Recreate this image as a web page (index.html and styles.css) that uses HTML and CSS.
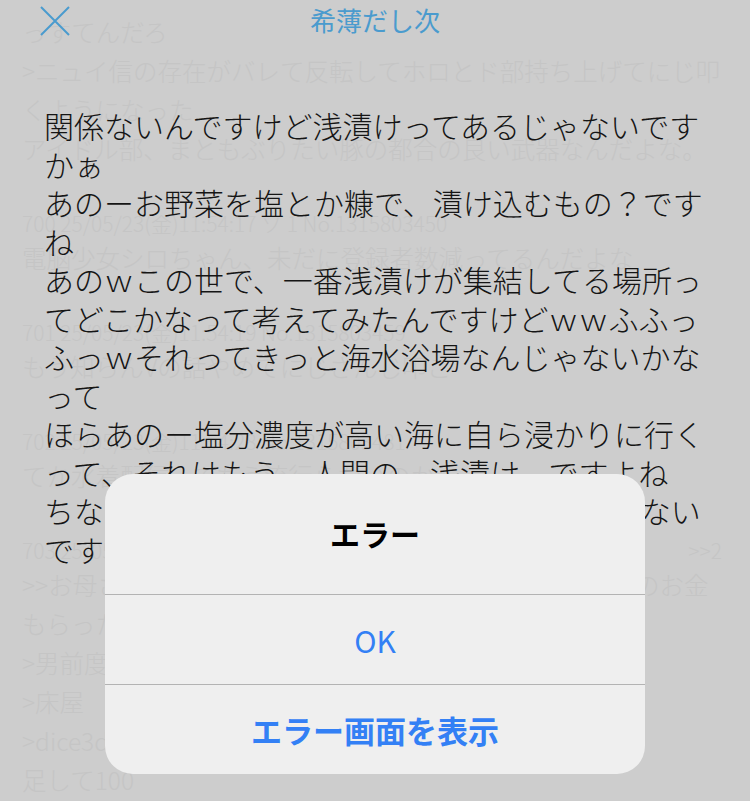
FILE: index.html
```html
<!DOCTYPE html>
<html lang="ja">
  <head>
    <meta charset="UTF-8" />
    <meta name="viewport" content="width=device-width, initial-scale=1.0" />
    <title>希薄だし次</title>
    <link rel="stylesheet" href="styles.css">
  </head>
  <body>
    <div class="screen">
      <!-- thread behind the dimmed layer -->
      <div class="thread">
        <div class="post-body first">
          <div class="line">っすてんだろ</div>
          <div class="line">&gt;ニュイ信の存在がバレて反転してホロとド部持ち上げてにじ叩</div>
          <div class="line">くようになった</div>
          <div class="line">アイドル部、まともぶりたい豚の都合の良い武器なんだよな。</div>
        </div>

        <div class="post">
          <div class="post-head">700 25/05/23(金)11:54:17 ソ 1 No.1315803450</div>
          <div class="post-body">
            <div class="line">電脳少女シロちゃん、未だに登録者数減ってるんだよな</div>
          </div>
        </div>

        <div class="post">
          <div class="post-head">701 25/05/23(金)11:54:19 No.1315803459</div>
          <div class="post-body">
            <div class="line">もう知らんVの話やめてにじさんじ叩こ</div>
          </div>
        </div>

        <div class="post">
          <div class="post-head">702 25/05/23(金)11:54:28 No.1315803481</div>
          <div class="post-body">
            <div class="line">てか水着配信ってもう流行らないのか</div>
          </div>
        </div>

        <div class="post">
          <div class="post-head"><span>703 25/05/23(金)11:54:36 No.1315803502</span><span>&gt;&gt;2</span></div>
          <div class="post-body">
            <div class="line">&gt;&gt;お母さんから散髪に行きなさいってちゃんと渡した例のお金</div>
            <div class="line">もらったばかりなのに</div>
            <div class="line">&gt;男前度</div>
            <div class="line">&gt;床屋</div>
            <div class="line">&gt;dice3d100</div>
            <div class="line">足して100</div>
          </div>
        </div>
      </div>

      <!-- top bar -->
      <div class="nav">
        <svg class="nav-close" width="32" height="30" viewBox="0 0 32 30">
          <path d="M2 1 L30 29 M30 1 L2 29" fill="none" stroke="currentColor" stroke-width="2" />
        </svg>
        <div class="nav-title">希薄だし次</div>
      </div>

      <!-- quoted text shown over the thread -->
      <div class="quote">
        <p>関係ないんですけど浅漬けってあるじゃないですかぁ</p>
        <p>あのーお野菜を塩とか糠で、漬け込むもの？ですね</p>
        <p>あのｗこの世で、一番浅漬けが集結してる場所ってどこかなって考えてみたんですけどｗｗふふっふっｗそれってきっと海水浴場なんじゃないかなって</p>
        <p>ほらあのー塩分濃度が高い海に自ら浸かりに行くって、それはもう、人間の、浅漬け、ですよね</p>
        <p>ちなみに僕は浅漬けってあんまり食べたことないです</p>
      </div>

      <!-- alert -->
      <div class="alert">
        <div class="alert-title">エラー</div>
        <div class="alert-btn">OK</div>
        <div class="alert-btn strong">エラー画面を表示</div>
      </div>
    </div>
  </body>
</html>
```

FILE: styles.css
```css
body {
  margin: 0;
  font-family: "Noto Sans CJK JP", "Noto Sans", sans-serif;
}
.screen {
  position: relative;
  width: 750px;
  height: 801px;
  overflow: hidden;
  background-color: #cdcdcd;
}

/* faint thread */
.thread {
  padding: 12px 0 0 22px;
  color: #c5c5c5;
  font-weight: 300;
}
.post {
  margin-top: 40px;
}
.post-head {
  display: flex;
  justify-content: space-between;
  padding-right: 28px;
  font-size: 21px;
  line-height: 30px;
}
.post-body {
  font-size: 24.5px;
  line-height: 39px;
}
.line {
  white-space: nowrap;
}

/* nav */
.nav {
  position: absolute;
  top: 0;
  left: 0;
  right: 0;
  height: 42px;
  color: #4a9bce;
}
.nav-close {
  position: absolute;
  left: 39px;
  top: 6px;
}
.nav-title {
  text-align: center;
  font-size: 26px;
  line-height: 40px;
}

/* quote */
.quote {
  position: absolute;
  left: 44px;
  top: 106px;
  width: 664px;
  color: #151515;
  font-size: 30px;
  font-weight: 300;
  line-height: 38.5px;
  line-break: normal;
}
.quote p {
  margin: 0;
}

/* alert */
.alert {
  position: absolute;
  left: 105px;
  top: 474px;
  width: 540px;
  border-radius: 28px;
  background-color: #efefef;
  overflow: hidden;
}
.alert-title {
  height: 120px;
  display: flex;
  align-items: center;
  justify-content: center;
  font-size: 30px;
  font-weight: bold;
  color: #000;
  padding-bottom: 2px;
  box-sizing: border-box;
}
.alert-btn {
  height: 89px;
  display: flex;
  align-items: center;
  justify-content: center;
  border-top: 1px solid #b3b3b3;
  font-size: 30px;
  color: #3380f5;
}
.alert-btn.strong {
  font-weight: bold;
  font-size: 31px;
}
```
